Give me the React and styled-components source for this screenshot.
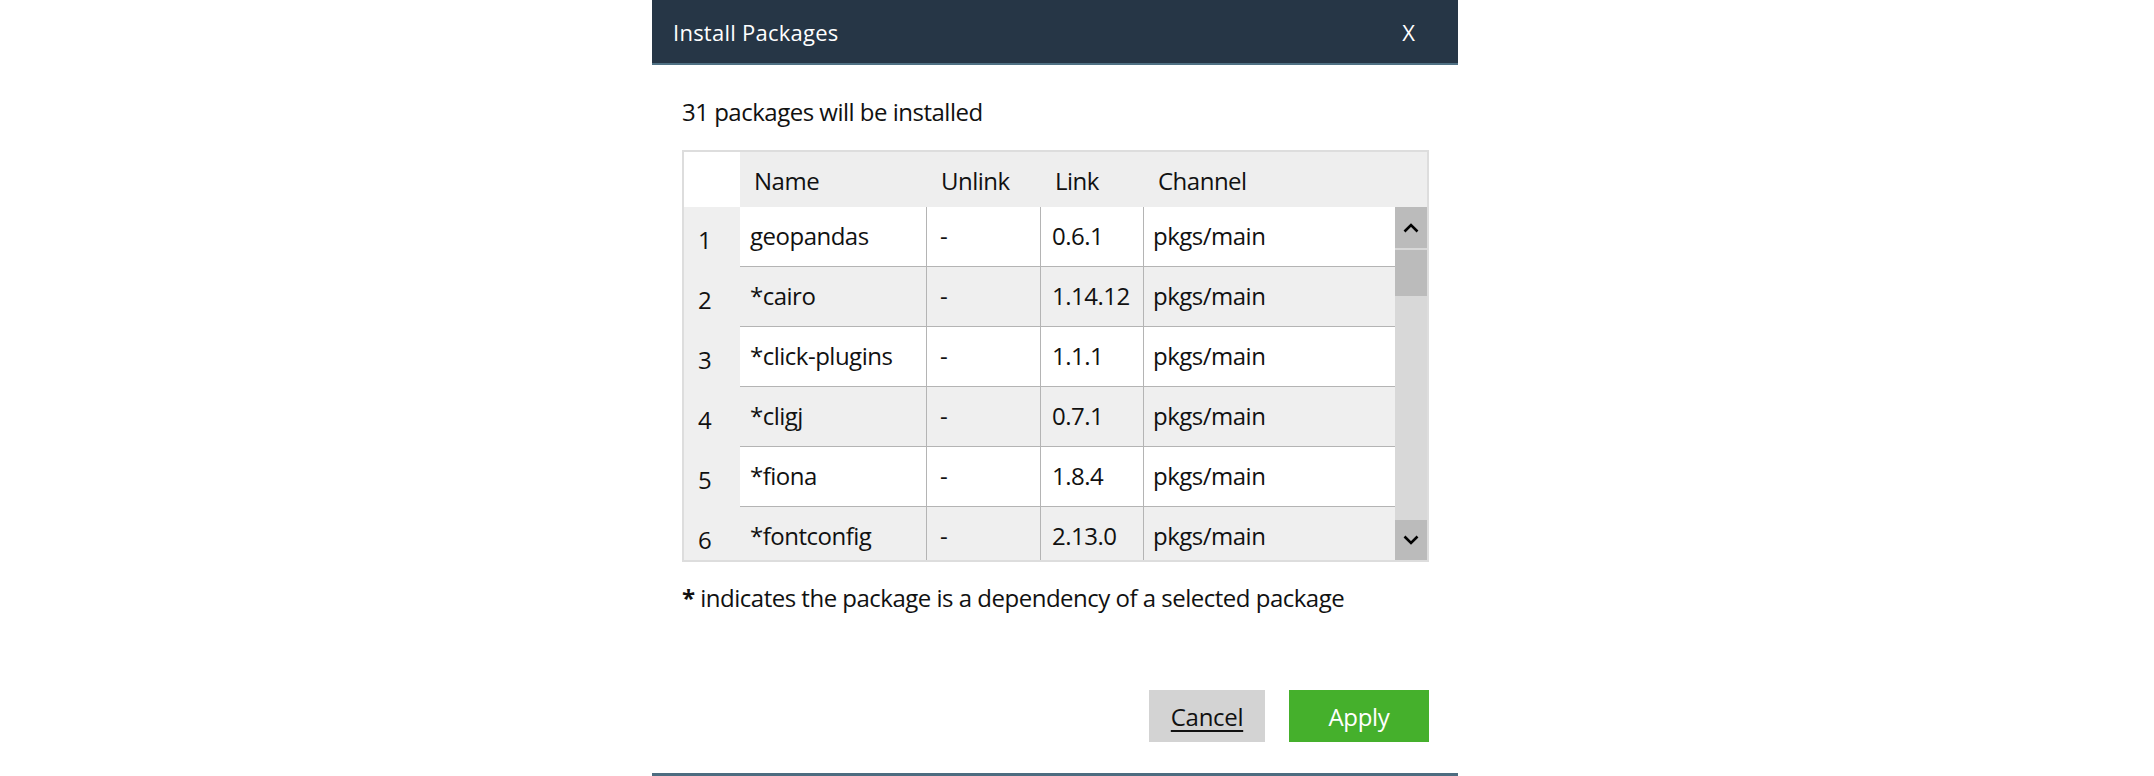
import React from "react";
import styled, { createGlobalStyle } from "styled-components";

const GlobalStyle = createGlobalStyle`
  html, body {
    margin: 0;
    padding: 0;
    background: #ffffff;
  }
  body {
    font-family: "Open Sans", "Noto Sans", "Liberation Sans", sans-serif;
    color: #111111;
  }
`;

const Page = styled.div`
  display: flex;
  padding-left: 652px;
  height: 776px;
  box-sizing: border-box;
`;

const Dialog = styled.div`
  width: 806px;
  height: 776px;
  display: flex;
  flex-direction: column;
  box-sizing: border-box;
  border-bottom: 3px solid #4d6c80;
  background: #ffffff;
`;

const Header = styled.div`
  height: 65px;
  box-sizing: border-box;
  background: #263646;
  border-bottom: 2px solid #4f7184;
  display: flex;
  align-items: center;
  justify-content: space-between;
  padding: 0 43px 0 21px;
`;

const Title = styled.div`
  color: #ffffff;
  font-size: 22px;
  letter-spacing: 0.25px;
`;

const Close = styled.button`
  background: none;
  border: none;
  padding: 0;
  color: #ffffff;
  font-family: inherit;
  font-size: 22px;
  cursor: pointer;
`;

const Body = styled.div`
  flex: 1;
  display: flex;
  flex-direction: column;
  padding: 0 29px 0 30px;
`;

const Text = styled.div`
  font-size: 24px;
  line-height: 32px;
  letter-spacing: -0.5px;
  margin-top: ${(p) => p.$top}px;
`;

const Frame = styled.div`
  margin-top: 22px;
  border: 2px solid #dddddd;
  height: 412px;
  box-sizing: border-box;
  display: flex;
  flex-direction: column;
  overflow: hidden;
`;

const COLS = "56px 187px 114px 103px 252px";

const HeadRow = styled.div`
  display: grid;
  grid-template-columns: ${COLS} 32px;
  height: 55px;
  background: #eeeeee;
  flex-shrink: 0;
`;

const HeadCell = styled.div`
  display: flex;
  align-items: center;
  padding: 2px 0 0 14px;
  font-size: 24px;
  letter-spacing: -0.5px;
  background: ${(p) => (p.$corner ? "#ffffff" : "transparent")};
`;

const BodyArea = styled.div`
  flex: 1;
  display: flex;
  min-height: 0;
`;

const Rows = styled.div`
  flex: 1;
  overflow: hidden;
`;

const Row = styled.div`
  display: grid;
  grid-template-columns: ${COLS};
  height: 60px;
`;

const IndexCell = styled.div`
  background: #efefef;
  display: flex;
  align-items: center;
  padding: 4px 0 0 14px;
  font-size: 24px;
`;

const Cell = styled.div`
  background: ${(p) => (p.$alt ? "#efefef" : "#ffffff")};
  border-bottom: 1px solid #b4b4b4;
  border-right: ${(p) => (p.$last ? "none" : "1px solid #b4b4b4")};
  display: flex;
  align-items: center;
  padding: 0 0 3px ${(p) => p.$pad}px;
  font-size: 24px;
  letter-spacing: -0.5px;
  white-space: nowrap;
`;

const Scrollbar = styled.div`
  width: 32px;
  background: #d8d8d8;
  display: flex;
  flex-direction: column;
  flex-shrink: 0;
`;

const ScrollButton = styled.div`
  height: ${(p) => p.$h}px;
  background: #bbbbbb;
  display: flex;
  align-items: center;
  justify-content: center;
  flex-shrink: 0;
`;

const Thumb = styled.div`
  height: 46px;
  margin-top: 2px;
  background: #bbbbbb;
`;

const Track = styled.div`
  flex: 1;
`;

const Star = styled.b`
  font-weight: 700;
`;

const Actions = styled.div`
  margin-top: 76px;
  display: flex;
  justify-content: flex-end;
  gap: 24px;
`;

const Button = styled.button`
  height: 52px;
  width: ${(p) => p.$w}px;
  border: none;
  padding: 0;
  font-family: inherit;
  font-size: 24px;
  letter-spacing: -0.3px;
  cursor: pointer;
  background: ${(p) => (p.$primary ? "#45b02c" : "#d3d3d3")};
  color: ${(p) => (p.$primary ? "#ffffff" : "#111111")};
  text-decoration: ${(p) => (p.$primary ? "none" : "underline")};
  text-underline-offset: 4px;
`;

const Chevron = ({ up }) => (
  <svg width="16" height="10" viewBox="0 0 16 10">
    <path
      d={up ? "M1.5 8.5 L8 2 L14.5 8.5" : "M1.5 1.5 L8 8 L14.5 1.5"}
      fill="none"
      stroke="#000"
      strokeWidth="2.6"
    />
  </svg>
);

const packages = [
  ["geopandas", "-", "0.6.1", "pkgs/main"],
  ["*cairo", "-", "1.14.12", "pkgs/main"],
  ["*click-plugins", "-", "1.1.1", "pkgs/main"],
  ["*cligj", "-", "0.7.1", "pkgs/main"],
  ["*fiona", "-", "1.8.4", "pkgs/main"],
  ["*fontconfig", "-", "2.13.0", "pkgs/main"],
];

export default function App() {
  return (
    <>
      <GlobalStyle />
      <Page>
        <Dialog>
          <Header>
            <Title>Install Packages</Title>
            <Close>X</Close>
          </Header>
          <Body>
            <Text $top={31}>31 packages will be installed</Text>
            <Frame>
              <HeadRow>
                <HeadCell $corner />
                <HeadCell>Name</HeadCell>
                <HeadCell>Unlink</HeadCell>
                <HeadCell>Link</HeadCell>
                <HeadCell>Channel</HeadCell>
                <HeadCell />
              </HeadRow>
              <BodyArea>
                <Rows>
                  {packages.map((p, i) => (
                    <Row key={p[0]}>
                      <IndexCell>{i + 1}</IndexCell>
                      <Cell $alt={i % 2 === 1} $pad={10}>{p[0]}</Cell>
                      <Cell $alt={i % 2 === 1} $pad={13}>{p[1]}</Cell>
                      <Cell $alt={i % 2 === 1} $pad={11}>{p[2]}</Cell>
                      <Cell $alt={i % 2 === 1} $pad={9} $last>{p[3]}</Cell>
                    </Row>
                  ))}
                </Rows>
                <Scrollbar>
                  <ScrollButton $h={41}>
                    <Chevron up />
                  </ScrollButton>
                  <Thumb />
                  <Track />
                  <ScrollButton $h={40}>
                    <Chevron />
                  </ScrollButton>
                </Scrollbar>
              </BodyArea>
            </Frame>
            <Text $top={20}>
              <Star>*</Star> indicates the package is a dependency of a selected package
            </Text>
            <Actions>
              <Button $w={116}>Cancel</Button>
              <Button $w={140} $primary>Apply</Button>
            </Actions>
          </Body>
        </Dialog>
      </Page>
    </>
  );
}
